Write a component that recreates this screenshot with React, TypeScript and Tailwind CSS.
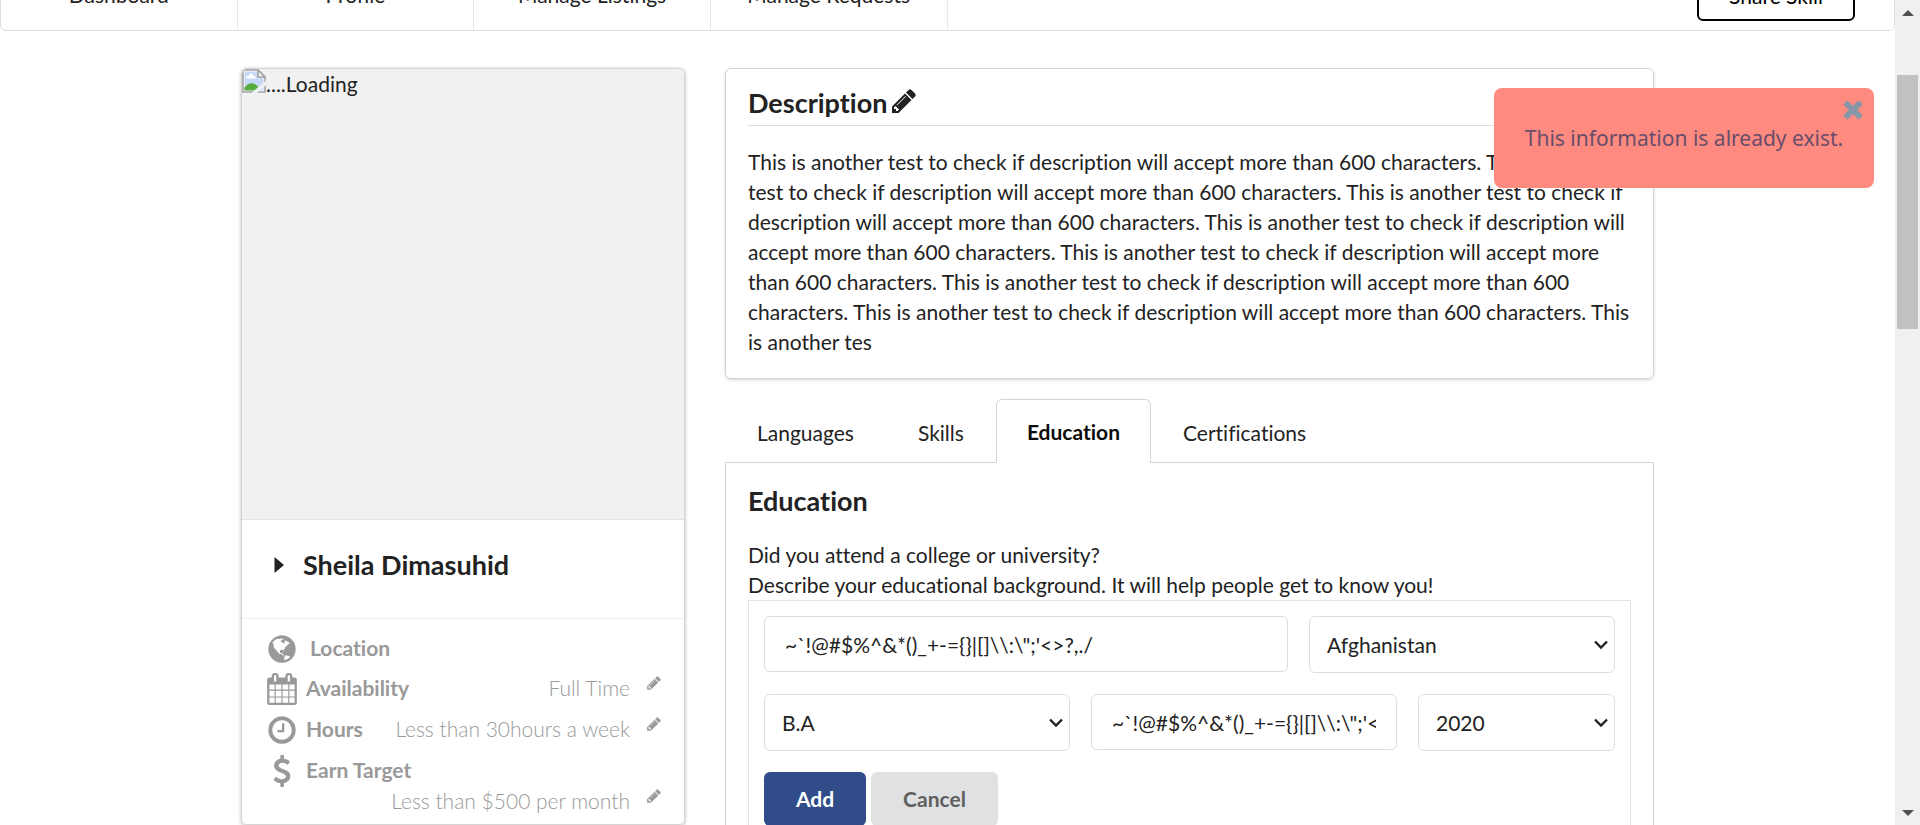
import React from "react";

const PENCIL =
  "M491 1536l91-91-235-235-91 91v107h128v128h107zm523-928q0-22-22-22-10 0-17 7l-542 542q-7 7-7 17 0 22 22 22 10 0 17-7l542-542q7-7 7-17zm-54-192l416 416-832 832h-416v-416zm683 96q0 53-37 90l-166 166-416-416 166-165q36-38 90-38 53 0 91 38l235 234q37 39 37 91z";
const CLOCK =
  "M1024 544v448q0 14-9 23t-23 9h-320q-14 0-23-9t-9-23v-64q0-14 9-23t23-9h224v-352q0-14 9-23t23-9h64q14 0 23 9t9 23zm416 352q0-148-73-273t-198-198-273-73-273 73-198 198-73 273 73 273 198 198 273 73 273-73 198-198 73-273zm224 0q0 209-103 385.5t-279.5 279.5-385.5 103-385.5-103-279.5-279.5-103-385.5 103-385.5 279.5-279.5 385.5-103 385.5 103 279.5 279.5 103 385.5z";
const CALENDAR =
  "M192 1664h288v-288h-288v288zm352 0h320v-288h-320v288zm-352-352h288v-320h-288v320zm352 0h320v-320h-320v320zm-352-384h288v-288h-288v288zm736 736h320v-288h-320v288zm-384-736h320v-288h-320v288zm768 736h288v-288h-288v288zm-384-352h320v-320h-320v320zm-352-864v-288q0-13-9.5-22.5t-22.5-9.5h-64q-13 0-22.5 9.5t-9.5 22.5v288q0 13 9.5 22.5t22.5 9.5h64q13 0 22.5-9.5t9.5-22.5zm736 864h288v-320h-288v320zm-384-384h320v-288h-320v288zm384 0h288v-288h-288v288zm32-480v-288q0-13-9.5-22.5t-22.5-9.5h-64q-13 0-22.5 9.5t-9.5 22.5v288q0 13 9.5 22.5t22.5 9.5h64q13 0 22.5-9.5t9.5-22.5zm384-64v1280q0 52-38 90t-90 38h-1408q-52 0-90-38t-38-90v-1280q0-52 38-90t90-38h128v-96q0-66 47-113t113-47h64q66 0 113 47t47 113v96h384v-96q0-66 47-113t113-47h64q66 0 113 47t47 113v96h128q52 0 90 38t38 90z";
const DOLLAR =
  "M1362 1185q0 153-99.5 263.5t-258.5 136.5v175q0 14-9 23t-23 9h-135q-13 0-22.5-9.5t-9.5-22.5v-175q-66-9-127.5-31t-101.5-44.5-74-48-46.5-37.5-17.5-18q-17-21-2-41l103-135q7-10 23-12 15-2 24 9l2 2q113 99 243 125 37 8 74 8 81 0 142.5-43t61.5-122q0-28-15-53t-33.5-42-58.5-37.5-66-32-80-32.5q-39-16-61.5-25t-61.5-26.5-62.5-31-56.5-35.5-53.5-42.5-43.5-49-35.5-58-21-66.5-8.5-78q0-138 98-242t255-134v-180q0-13 9.5-22.5t22.5-9.5h135q14 0 23 9t9 23v176q57 6 110.5 23t87 33.5 63.5 37.5 39 29 15 14q17 18 5 38l-81 146q-8 15-23 16-14 3-27-7-3-3-14.5-12t-39-26.5-58.5-32-74.5-26-85.5-11.5q-95 0-155 43t-60 111q0 26 8.5 48t29.5 41.5 39.5 33 56 31 60.5 27 70 27.5q53 20 81 31.5t76 35 75.5 42.5 62 50 53 63.5 31.5 76.5 13 94z";
const GLOBE =
  "M896 128q209 0 385.5 103t279.5 279.5 103 385.5-103 385.5-279.5 279.5-385.5 103-385.5-103-279.5-279.5-103-385.5 103-385.5 279.5-279.5 385.5-103zm274 521q-2 1-9.5 9.5t-13.5 9.5q2 0 4.5-5t5-11 3.5-7q6-7 22-15 14-6 52-12 34-8 51 11-2-2 9.5-13t14.5-12q3-2 15-4.5t15-7.5l2-22q-12 1-17.5-7t-6.5-21q0 2-6 8 0-7-4.5-8t-11.5 1-9 1q-10-3-15-7.5t-8-16.5-4-15q-2-5-9.5-11t-9.5-10q-1-2-2.5-5.5t-3-6.5-4-5.5-5.5-2.5-7 5-7.5 10-4.5 5q-3-2-6-1.5t-4.500 1-4.5 3-5 3.5q-3 2-8.5 3t-8.5 2q15-5-1-11-10-4-16-3 9-4 7.5-12t-8.5-14h5q-1-4-8.5-8.5t-17.5-8.5-13-6q-8-5-34-9.5t-33-.5q-5 6-4.5 10.5t4 14 3.5 12.5q1 6-5.5 13t-6.5 12q0 7 14 15.5t10 21.5q-3 8-16 16t-16 12q-5 8-1.5 18.5t10.5 16.5q2 2 1.5 4t-3.5 4.5-5.5 4-6.5 3.5l-3 2q-11 5-20.5-6t-13.5-26q-7-25-16-30-23-8-29 1-5-13-41-26-25-9-58-4 6-1 0-15-7-15-19-12 3-6 4-17.5t1-13.5q3-13 12-23 1-1 7-8.5t9.5-13.5.5-6q35 4 50-11 5-5 11.5-17t10.5-17q9-6 14-5.5t14.5 5.5 14.5 5q14 1 15.5-11t-7.5-20q12 1 3-17-5-7-8-9-12-4-27 5-8 4 2 8-1-1-9.5 10.5t-16.5 17.5-16-5q-1-1-5.5-13.5t-9.5-13.5q-8 0-16 15 3-8-11-15t-24-8q19-12-8-27-7-4-20.5-5t-19.5 4q-5 7-5.5 11.5t5 8 10.5 5.5 11.5 4 8.5 3q14 10 8 14-2 1-8.5 3.5t-11.5 4.5-6 4q-3 4 0 14t-2 14q-5-5-9-17.5t-7-16.5q7 9-25 6l-10-1q-4 0-16 2t-20.5 1-13.5-8q-4-8 0-20 1-4 4-2-4-3-11-9.5t-10-8.5q-46 15-94 41 6 1 12-1 5-2 13-6.5t10-5.5q34-14 42-7l5-5q14 16 20 25-7-4-30-1-20 6-22 12 7 12 5 18-4-3-11.5-10t-14.5-11-15-5q-16 0-22 1-146 80-235 222 7 7 12 8 4 1 5 9t2.5 11 11.5-3q9 8 3 19 1-1 44 27 19 17 21 21 3 11-10 18-1-2-9-9t-9-4q-3 5 .5 18.5t10.5 12.5q-7 0-9.5 16t-2.5 35.5-1 23.5l2 1q-3 12 5.5 34.5t21.5 19.5q-13 3 20 43 6 8 8 9 3 2 12 7.5t15 10 10 10.5q4 5 10 22.5t14 23.5q-2 6 9.5 20t10.5 23q-1 0-2.5 1t-2.5 1q3 7 15.5 14t15.5 13q1 3 2 10t3 11 8 2q2-20-24-62-15-25-17-29-3-5-5.5-15.5t-4.5-14.5q2 0 6 1.5t8.5 3.5 7.5 4 2 3q-3 7 2 17.5t12 18.5 17 19 12 13q6 6 14 19.5t0 13.5q9 0 20 10.5t17 19.5q5 8 8 26t5 24q2 7 8.5 13.5t12.5 9.5l16 8 13 7q5 2 18.5 10.5t21.5 11.5q10 4 16 4t14.5-2.5 13.5-3.5q15-2 29 15t21 21q36 19 55 11-2 1 .5 7.5t8 15.5 9 14.5 5.5 8.5q5 6 18 15t18 15q6-4 7-9-3 8 7 20t18 10q14-3 14-32-31 15-49-18 0-1-2.5-5.5t-4-8.5-2.5-8.5 0-7.5 5-3q9 0 10-3.5t-2-12.5-4-13q-1-8-11-20t-12-15q-5 9-16 8t-16-9q0 1-1.5 5.5t-1.5 6.5q-13 0-15-1 1-3 2.5-17.5t3.5-22.5q1-4 5.5-12t7.5-14.5 4-12.5-4.5-9.5-17.5-2.5q-19 1-26 20-1 3-3 10.5t-5 11.5-9 7q-7 3-24 2t-24-5q-13-8-22.5-29t-9.5-37q0-10 2.5-26.5t3-25-5.5-24.5q3-2 9-9.5t10-10.5q2-1 4.5-1.5t4.5 0 4-1.5 3-6q-1-1-4-3-3-3-4-3 7 3 28.5-1.5t27.5 1.5q15 11 22-2 0-1-2.5-9.5t-.5-13.5q5 27 29 9 3 3 15.5 5t17.5 5q3 2 7 5.5t5.5 4.5 5-.5 8.5-6.5q10 14 12 24 11 40 19 44 7 3 11 2t4.5-9.5 0-14-1.5-12.5l-1-8v-18l-1-8q-15-3-18.5-12t1.5-18.5 15-18.5q1-1 8-3.5t15.5-6.5 12.5-8q21-19 15-35 7 0 11-9-1 0-5-3t-7.5-5-4.5-2q9-5 2-16 5-3 7.5-11t7.5-10q9 12 21 2 8-8 1-16 5-7 20.5-10.5t18.5-9.5q7 2 8-2t1-12 3-12q4-5 15-9t13-5l17-11q3-4 0-4 18 2 31-11 10-11-6-20 3-6-3-9.5t-15-5.5q3-1 11.5-.5t10.5-1.5q15-10-7-16-17-5-43 12zm-163 877q206-36 351-189-3-3-12.5-4.5t-12.5-3.5q-18-7-24-8 1-7-2.5-13t-8-9-12.5-8-11-7q-2-2-7-6t-7-5.5-7.5-4.5-8.5-2-10 1l-3 1q-3 1-5.5 2.5t-5.5 3-4 3 0 2.5q-21-17-36-22-5-1-11-5.5t-10.5-7-10-1.5-11.5 7q-5 5-6 15t-2 13q-7-5 0-17.5t2-18.5q-3-6-10.5-4.5t-12 4.5-11.5 8.5-9 6.5-8.5 5.5-8.5 7.5q-3 4-6 12t-5 11q-2-4-11.5-6.5t-9.5-5.5q2 10 4 35t5 38q7 31-12 48-27 25-29 40-4 22 12 26 0 7-8 20.5t-7 21.5q0 6 2 16z";
const CLOSE =
  "M1490 1322q0 40-28 68l-136 136q-28 28-68 28t-68-28l-294-294-294 294q-28 28-68 28t-68-28l-136-136q-28-28-28-68t28-68l294-294-294-294q-28-28-28-68t28-68l136-136q28-28 68-28t68 28l294 294 294-294q28-28 68-28t68 28l136 136q28 28 28 68t-28 68l-294 294 294 294q28 28 28 68z";

function Glyph({ d, className }: { d: string; className: string }) {
  return (
    <svg viewBox="0 0 1792 1792" fill="currentColor" aria-hidden="true" className={`shrink-0 overflow-visible ${className}`}>
      <path d={d} />
    </svg>
  );
}

const navItems = ["Dashboard", "Profile", "Manage Listings", "Manage Requests"];

function TopNav() {
  return (
    <div className="flex h-[31px] items-end overflow-hidden">
      <nav className="flex h-[70px] w-full rounded-b-md border border-[#dededf]">
        {navItems.map((item) => (
          <a key={item} href="#" className="flex w-1/8 justify-center border-r border-[#e8e8e8] pt-[18px]">
            {item}
          </a>
        ))}
        <div className="ml-auto pt-2 pr-[39px]">
          <button type="button" className="h-[51px] w-[158px] rounded-md border-2 border-black text-black">
            Share Skill
          </button>
        </div>
      </nav>
    </div>
  );
}

function BrokenImage() {
  return (
    <svg viewBox="0 0 24 24" aria-hidden="true" className="h-6 w-6 shrink-0">
      <path d="M1 1h15l7 7v15H1z" fill="#fff" stroke="#a3a3a3" strokeWidth="1.600" />
      <path d="M2.500 2.500h13v6h6v13h-19z" fill="#c8d8f7" />
      <path d="M4 9.500c0-2.500 2-3 3-2.500 0-3 4-3 4.500 0 2-.5 2.500 1 2.500 2.500z" fill="#fff" />
      <path d="M2.500 21.500v-3c3-4.500 8-5.500 11-3l3 2.500-4 3.500z" fill="#55ae3b" />
      <path d="M24 11.500L9.500 24H15l9-8z" fill="#f1f1f1" />
      <path d="M16 1v7h7z" fill="#f1f1f1" stroke="#a3a3a3" strokeWidth="1.600" />
    </svg>
  );
}

function EditValue({ value, label }: { value: string; label: string }) {
  return (
    <div className="ml-auto flex gap-4 font-light">
      <span>{value}</span>
      <button type="button" aria-label={`Edit ${label}`} className="mt-0.5 h-4">
        <Glyph d={PENCIL} className="h-4 w-4" />
      </button>
    </div>
  );
}

function ProfileCard() {
  return (
    <section className="w-[444px] shrink-0 overflow-hidden rounded-md border border-[#d4d4d5] pb-2 shadow-[0_1px_3px_1px_#d4d4d5]">
      <div className="flex h-[451px] border-b border-[#e3e3e3] bg-[#f1f1f1]">
        <BrokenImage />
        <span>....Loading</span>
      </div>
      <div className="flex h-[99px] items-center gap-[19px] border-b border-[#ededed] px-8 pb-2">
        <svg viewBox="0 0 10 16" aria-hidden="true" className="h-4 w-[10px]">
          <path d="M0.500 0L10 8L0.500 16z" fill="#222" />
        </svg>
        <h1 className="text-[27px] font-bold">Sheila Dimasuhid</h1>
      </div>
      <ul className="pt-[10px] pr-[22px] pl-6 text-[#999]">
        <li className="flex h-10 gap-2 pt-1">
          <Glyph d={GLOBE} className="h-8 w-8" />
          <span className="pl-1 font-bold">Location</span>
        </li>
        <li className="flex h-[41px] gap-2 pt-1">
          <Glyph d={CALENDAR} className="h-8 w-8" />
          <span className="font-bold">Availability</span>
          <EditValue value="Full Time" label="availability" />
        </li>
        <li className="flex h-[41px] gap-2 pt-1">
          <Glyph d={CLOCK} className="h-8 w-8" />
          <span className="font-bold">Hours</span>
          <EditValue value="Less than 30hours a week" label="hours" />
        </li>
        <li className="pt-1">
          <div className="flex h-[31px] gap-2">
            <Glyph d={DOLLAR} className="h-8 w-8" />
            <span className="font-bold">Earn Target</span>
          </div>
          <div className="flex">
            <EditValue value="Less than $500 per month" label="earn target" />
          </div>
        </li>
      </ul>
    </section>
  );
}

function DescriptionCard() {
  return (
    <section className="rounded-md border border-[#d4d4d5] px-[22px] pt-[15px] pb-[21px] shadow-[0_1px_3px_0_#d4d4d5]">
      <div className="flex h-[42px] gap-[3px] border-b border-[#dededf] pt-[3px]">
        <h2 className="text-[27px] leading-8 font-bold">Description</h2>
        <button type="button" aria-label="Edit description" className="h-7">
          <Glyph d={PENCIL} className="h-7 w-7" />
        </button>
      </div>
      <p className="pt-[21px]">
        This is another test to check if description will accept more than 600 characters. This is another test to
        check if description will accept more than 600 characters. This is another test to check if description will
        accept more than 600 characters. This is another test to check if description will accept more than 600
        characters. This is another test to check if description will accept more than 600 characters. This is another
        test to check if description will accept more than 600 characters. This is another test to check if description
        will accept more than 600 characters. This is another tes
      </p>
    </section>
  );
}

function SelectBox({ label, value, className }: { label: string; value: string; className: string }) {
  return (
    <div className={`relative ${className}`}>
      <select
        aria-label={label}
        defaultValue={value}
        className="h-[57px] w-full appearance-none rounded-md border border-[#dededf] bg-white px-[17px]"
      >
        <option>{value}</option>
      </select>
      <svg viewBox="0 0 14 10" aria-hidden="true" className="pointer-events-none absolute top-6 right-[7px] h-[10px] w-[14px]">
        <path d="M1 1.500L7 7.500L13 1.500" fill="none" stroke="#222" strokeWidth="2.400" />
      </svg>
    </div>
  );
}

function TextBox({ label, className }: { label: string; className: string }) {
  return (
    <input
      type="text"
      aria-label={label}
      defaultValue={"~`!@#$%^&*()_+-={}|[]\\\\:\\\";'<>?,./"}
      className={`h-14 w-full rounded-md border border-[#dededf] bg-white px-5 ${className}`}
    />
  );
}

const tabs = ["Languages", "Skills", "Education", "Certifications"];

function EducationPanel() {
  return (
    <section className="mt-5">
      <div role="tablist" className="flex">
        {tabs.map((tab) => (
          <button
            key={tab}
            type="button"
            role="tab"
            aria-selected={tab === "Education"}
            className={
              tab === "Education"
                ? "relative -mb-px h-16 rounded-t-md border border-b-0 border-[#d4d4d5] bg-white px-[30px] font-bold text-[#0d0d0d]"
                : "h-[63px] px-8 pt-[5px]"
            }
          >
            {tab}
          </button>
        ))}
      </div>
      <div className="rounded-b-md border border-[#d4d4d5] px-[22px] pt-[22px] pb-6">
        <h2 className="text-[27px] leading-8 font-bold">Education</h2>
        <p className="pt-[23px]">
          Did you attend a college or university?
          <br />
          Describe your educational background. It will help people get to know you!
        </p>
        <form className="grid grid-cols-16 gap-x-[21px] gap-y-[21px] border border-[#e3e3e3] px-[15px] py-[15px]">
          <TextBox label="College or university name" className="col-span-10" />
          <SelectBox label="Country" value="Afghanistan" className="col-span-6" />
          <SelectBox label="Title" value="B.A" className="col-span-6" />
          <TextBox label="Degree" className="col-span-6" />
          <SelectBox label="Year of graduation" value="2020" className="col-span-4" />
          <div className="col-span-16 flex gap-[5px]">
            <button type="button" className="h-[54px] w-[102px] rounded-md bg-[#304d8a] font-bold text-white">
              Add
            </button>
            <button type="button" className="h-[54px] w-[127px] rounded-md bg-[#e0e1e2] font-bold text-[#5f5f60]">
              Cancel
            </button>
          </div>
        </form>
      </div>
    </section>
  );
}

function Toast() {
  return (
    <div
      role="alert"
      className="absolute top-[88px] right-[46px] flex h-[100px] w-[380px] items-center justify-center rounded-lg bg-[#ff8a80] font-['Noto_Sans',sans-serif] text-[#694d6b]"
    >
      This information is already exist.
      <button type="button" aria-label="Close" className="absolute top-[7px] right-[7px] text-[#8797a8]">
        <Glyph d={CLOSE} className="h-7 w-7" />
      </button>
    </div>
  );
}

function ScrollRail() {
  return (
    <div aria-hidden="true" className="flex w-[25px] shrink-0 flex-col items-center bg-[#f0f0f0] pt-[10px] pb-[9px]">
      <svg viewBox="0 0 12 6" className="h-[6px] w-3">
        <path d="M0 6L6 0L12 6z" fill="#505050" />
      </svg>
      <div className="mt-[59px] h-[254px] w-[21px] bg-[#c1c1c1]" />
      <svg viewBox="0 0 12 6" className="mt-auto h-[6px] w-3">
        <path d="M0 0L6 6L12 0z" fill="#505050" />
      </svg>
    </div>
  );
}

export default function App() {
  return (
    <div className="relative flex h-screen overflow-hidden bg-white font-['Lato',sans-serif] text-[21px] leading-[30px] text-[#222] [font-variant-ligatures:none]">
      <div className="min-w-0 flex-1">
        <TopNav />
        <main className="mx-auto mt-[37px] flex max-w-[1413px] items-start gap-10">
          <ProfileCard />
          <div className="min-w-0 flex-1">
            <DescriptionCard />
            <EducationPanel />
          </div>
        </main>
      </div>
      <ScrollRail />
      <Toast />
    </div>
  );
}
